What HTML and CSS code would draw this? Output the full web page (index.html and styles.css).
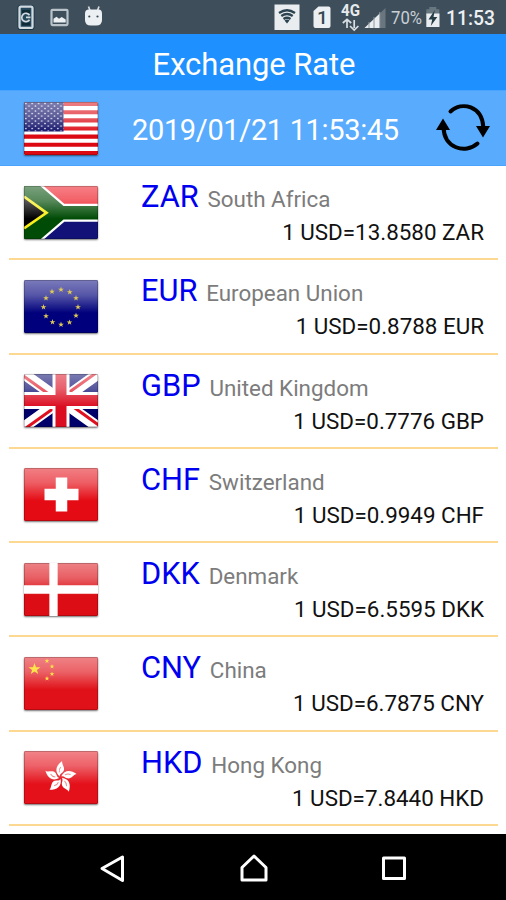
FILE: index.html
```html
<!DOCTYPE html>
<html lang="en">
<head>
<meta charset="utf-8">
<title>Exchange Rate</title>
<link rel="stylesheet" href="styles.css">
</head>
<body>
<svg class="defs" aria-hidden="true">
  <defs>
    <linearGradient id="shine" x1="0" y1="0" x2="0" y2="1">
      <stop offset="0" stop-color="#fff" stop-opacity=".48"/>
      <stop offset=".28" stop-color="#fff" stop-opacity=".34"/>
      <stop offset=".62" stop-color="#fff" stop-opacity="0"/>
    </linearGradient>
    <pattern id="stars" width="6.4" height="5" patternUnits="userSpaceOnUse">
      <circle cx="1.8" cy="1.5" r=".85" fill="#d8d8ee"/>
      <circle cx="5" cy="4" r=".85" fill="#d8d8ee"/>
    </pattern>
    <g id="gloss">
      <rect width="74" height="53" fill="url(#shine)"/>
      <rect x=".5" y=".5" width="73" height="52" fill="none" stroke="#000" stroke-opacity=".2"/>
    </g>
    <path id="star" d="M0-6 1.5-1.8 6-1.8 2.4.9 3.7 5.1 0 2.5-3.7 5.1-2.4.9-6-1.8-1.5-1.8z"/>
    <g id="petal">
      <path d="M-1-1C-7-6-5-12 .5-16.500C0-13.500 4.500-10 2.500-6.500C1.500-4.500-1-4-1-1z" fill="#fff"/>
      <path d="M-1.500-5Q-2.500-8-.5-10.500" fill="none" stroke="#e88" stroke-width="1"/>
    </g>
  </defs>
</svg>
<div class="screen">
  <header class="status">
    <svg class="status-left" viewBox="0 0 110 34">
      <rect x="17.500" y="5" width="17" height="25" rx="3" fill="#17384a"/>
      <rect x="19.500" y="6.700" width="13" height="21.200" rx="1.500" fill="#24475a" stroke="#d2d9df" stroke-width="2.300"/>
      <path d="M22 11.500h8M22 24h8" stroke="#102b38" stroke-width="3"/>
      <path d="M29.500 15.200a4.200 4.200 0 1 0 0 4.500M26 17.300h4.500" fill="none" stroke="#d2d9df" stroke-width="1.700"/>
      <rect x="51.500" y="9.800" width="16" height="15.300" rx="1" fill="#3e4e5b" stroke="#bac3ca" stroke-width="2.200"/>
      <path d="M53.500 22.500v-3.800l3-2 2.500 2 2.700-1.800 4 2.500v3.100z" fill="#edf0f2"/>
      <path d="M88.500 6.500l1.500 4M99 6.500l-1.500 4" stroke="#d7dce0" stroke-width="1.700"/>
      <path d="M85 13.500Q85 9.500 89 9.500h9.500Q102 9.500 102 13.500V20Q102 25.500 96 25.500h-5Q85 25.500 85 20z" fill="#edf0f2"/>
      <circle cx="89.300" cy="16.500" r="1.100" fill="#344854"/><circle cx="97.500" cy="16.500" r="1.100" fill="#344854"/>
    </svg>
    <svg class="status-right" viewBox="270 0 236 34">
      <rect x="274.500" y="4.500" width="25" height="25.500" fill="#e9edef"/>
      <g fill="none" stroke="#2c4351" stroke-width="2.300"><path d="M279 13Q287 7.500 295 13"/><path d="M281.300 16Q287 12 292.700 16"/><path d="M283.500 19Q287 16.500 290.500 19"/></g>
      <path d="M284.500 20.500Q287 18.700 289.500 20.500L287 23.500z" fill="#2c4351"/>
      <path d="M318.500 6.500h10a2 2 0 0 1 2 2V26a2 2 0 0 1-2 2h-13a2 2 0 0 1-2-2V11z" fill="#edf0f2"/>
      <text x="317" y="24.300" class="sim">1</text>
      <text x="341" y="15.500" class="network" textLength="19" lengthAdjust="spacingAndGlyphs">4G</text>
      <path d="M347 28v-7.500M342.800 23l4.200-3.700 4.200 3.700M354.200 20v8M350 26l4.200 4 4.200-4" fill="none" stroke="#d9dfe3" stroke-width="1.700"/>
      <path d="M385.500 8v20h-21z" fill="#697680"/>
      <path d="M380 13.300V28h-15.500z" fill="#e9edef"/>
      <path d="M369 22v6M374 17v11M379.800 12v16" stroke="#8a98a1" stroke-width="1"/>
      <text x="391" y="24.300" class="percent" textLength="31" lengthAdjust="spacingAndGlyphs">70%</text>
      <path d="M429.300 7h7v2.300h3v6h-13v-6h3z" fill="#68777f"/>
      <path d="M426.300 13.500h13.200V27h-13.200z" fill="#e9edef"/>
      <path d="M434.800 10l-6.300 9.500h3.700l-1.400 6.500 6.500-9h-3.800z" fill="#263c47"/>
      <text x="446" y="25" class="clock" textLength="49" lengthAdjust="spacingAndGlyphs">11:53</text>
    </svg>
  </header>
  <h1 class="title"><span>Exchange Rate</span></h1>
  <section class="base">
    <svg class="flag" viewBox="0 0 74 53">
      <rect width="74" height="53" fill="#fff"/>
      <path d="M0 2.050h74M0 10.200h74M0 18.350h74M0 26.500h74M0 34.650h74M0 42.800h74M0 50.950h74" stroke="#dc0812" stroke-width="4.080"/>
      <rect width="39.500" height="29.500" fill="#080864"/><rect width="39.500" height="29.500" fill="url(#stars)"/>
      <use href="#gloss"/>
    </svg>
    <time class="date">2019/01/21 11:53:45</time>
    <svg class="refresh" viewBox="0 0 56 52">
      <path d="M15.500 9.500C27-1 47 4 48.300 25M8.500 25C9 46 30 52.500 42.500 41.500" fill="none" stroke="#000" stroke-width="4" stroke-linecap="round"/>
      <path d="M41 24h14l-7 11.500zM1 28h14L8 16.500z"/>
    </svg>
  </section>
  <main class="rates">
    <article class="row">
      <svg class="flag" viewBox="0 0 74 53">
        <rect width="74" height="27" fill="#ed0d18"/><rect y="27" width="74" height="26" fill="#111178"/>
        <path d="M0-5 37 26.800 0 58.500M34 26.800h41" fill="none" stroke="#fff" stroke-width="18"/>
        <path d="M0-5v63l37-31.500z" fill="#004b05"/>
        <path d="M0-5 37 26.800 0 58.500M34 26.800h41" fill="none" stroke="#004b05" stroke-width="13.500"/>
        <path d="M0 9 23.500 26.800 0 44z" fill="#000"/><path d="M0 10.500 22.500 26.800 0 42.500" fill="none" stroke="#f8ee18" stroke-width="2.700"/>
        <use href="#gloss"/>
      </svg>
      <div class="info"><div class="currency"><span class="code">ZAR</span> <span class="country">South Africa</span></div><div class="rate">1 USD=13.8580 ZAR</div></div>
    </article>
    <article class="row">
      <svg class="flag" viewBox="0 0 74 53">
        <rect width="74" height="53" fill="#00007c"/>
        <use href="#gloss"/>
        <g fill="#dfca55"><use href="#star" transform="translate(37 9.500) scale(.48)"/><use href="#star" transform="translate(45.800 12) scale(.48)"/><use href="#star" transform="translate(52 18) scale(.48)"/><use href="#star" transform="translate(54 27) scale(.48)"/><use href="#star" transform="translate(52 35.500) scale(.48)"/><use href="#star" transform="translate(45.500 42.300) scale(.48)"/><use href="#star" transform="translate(37 44.500) scale(.48)"/><use href="#star" transform="translate(28.500 42) scale(.48)"/><use href="#star" transform="translate(22 36) scale(.48)"/><use href="#star" transform="translate(19.500 27) scale(.48)"/><use href="#star" transform="translate(22 18) scale(.48)"/><use href="#star" transform="translate(28 11.500) scale(.48)"/></g>
      </svg>
      <div class="info"><div class="currency"><span class="code">EUR</span> <span class="country">European Union</span></div><div class="rate">1 USD=0.8788 EUR</div></div>
    </article>
    <article class="row">
      <svg class="flag" viewBox="0 0 74 53">
        <rect width="74" height="53" fill="#00006b"/>
        <path d="M0 0 74 53M74 0 0 53" stroke="#fff" stroke-width="11"/>
        <path d="M-2 1 35 27.500M76 52 39 25.500M72-1 37 24M2 54 37 29" stroke="#df1020" stroke-width="3"/>
        <path d="M37 0v53M0 26.500h74" stroke="#fff" stroke-width="17"/>
        <path d="M37 0v53M0 26.500h74" stroke="#db0d20" stroke-width="11"/>
        <use href="#gloss"/>
      </svg>
      <div class="info"><div class="currency"><span class="code">GBP</span> <span class="country">United Kingdom</span></div><div class="rate">1 USD=0.7776 GBP</div></div>
    </article>
    <article class="row">
      <svg class="flag" viewBox="0 0 74 53">
        <rect width="74" height="53" fill="#e40b14"/><use href="#gloss"/>
        <path d="M37.500 9.500v34M20.500 26.500h34" stroke="#fff" stroke-width="11.500"/>
      </svg>
      <div class="info"><div class="currency"><span class="code">CHF</span> <span class="country">Switzerland</span></div><div class="rate">1 USD=0.9949 CHF</div></div>
    </article>
    <article class="row">
      <svg class="flag" viewBox="0 0 74 53">
        <rect width="74" height="53" fill="#dc0d14"/><use href="#gloss"/>
        <path d="M29.500 0v53M0 26.500h74" stroke="#fff" stroke-width="8.300"/>
      </svg>
      <div class="info"><div class="currency"><span class="code">DKK</span> <span class="country">Denmark</span></div><div class="rate">1 USD=6.5595 DKK</div></div>
    </article>
    <article class="row">
      <svg class="flag" viewBox="0 0 74 53">
        <rect width="74" height="53" fill="#e01118"/><use href="#gloss"/>
        <g fill="#ffe34a"><use href="#star" transform="translate(10.500 12)"/><use href="#star" transform="translate(23 4) scale(.4)"/><use href="#star" transform="translate(28 9.500) scale(.4)"/><use href="#star" transform="translate(28 17) scale(.4)"/><use href="#star" transform="translate(23 21.500) scale(.4)"/></g>
      </svg>
      <div class="info"><div class="currency"><span class="code">CNY</span> <span class="country">China</span></div><div class="rate">1 USD=6.7875 CNY</div></div>
    </article>
    <article class="row">
      <svg class="flag" viewBox="0 0 74 53">
        <rect width="74" height="53" fill="#e4111b"/><use href="#gloss"/>
        <g transform="translate(36.500 26.500) rotate(4)"><use href="#petal"/><use href="#petal" transform="rotate(72)"/><use href="#petal" transform="rotate(144)"/><use href="#petal" transform="rotate(216)"/><use href="#petal" transform="rotate(288)"/></g>
      </svg>
      <div class="info"><div class="currency"><span class="code">HKD</span> <span class="country">Hong Kong</span></div><div class="rate">1 USD=7.8440 HKD</div></div>
    </article>
  </main>
  <nav class="navigation">
    <svg viewBox="0 0 28 30"><path d="M3 14.500 23.500 3v23.500z"/></svg>
    <svg viewBox="0 0 28 30"><path d="M2 13.500 14 2l12 11.500v12.500h-24z"/></svg>
    <svg viewBox="0 0 28 30"><rect x="3.500" y="4" width="21" height="20.500"/></svg>
  </nav>
</div>
</body>
</html>
```
FILE: styles.css
```css
* { box-sizing: border-box; }
body { margin: 0; background: #fff; font-family: Roboto, "Liberation Sans", sans-serif; }
.defs { position: absolute; width: 0; height: 0; }
.screen { display: flex; flex-direction: column; width: 506px; height: 900px; overflow: hidden; }
.status { display: flex; justify-content: space-between; flex: 0 0 34px; background: #3e4e5b; }
.status-left { width: 110px; height: 34px; }
.status-right { width: 236px; height: 34px; }
.sim { font-size: 19px; font-weight: 500; fill: #344854; }
.network { font-size: 16px; font-weight: 700; fill: #e6eaed; }
.percent { font-size: 18.500px; fill: #c9d0d5; }
.clock { font-size: 20.500px; font-weight: 500; fill: #edf0f2; }
.title { display: flex; align-items: center; justify-content: center; flex: 0 0 56px; margin: 0; padding: 6px 0 0 2px; background: #1e90ff; color: #fff; font-size: 31px; font-weight: 400; line-height: 36px; letter-spacing: -.1px; }
.base { display: flex; align-items: center; flex: 0 0 76px; padding: 0 15px 0 24px; background: #58abfd; border-top: 1px solid #4aa3fc; border-bottom: 1px solid #4aa3fc; }
.flag { display: block; flex: none; width: 74px; height: 53px; border-radius: 1.500px; box-shadow: 0 1px 2px rgba(0, 0, 0, .55); }
.date { margin-left: 34px; color: #fff; font-size: 29px; line-height: 34px; letter-spacing: -.35px; white-space: nowrap; padding-top: 4px; }
.refresh { width: 56px; height: 52px; margin-left: auto; }
.rates { display: flex; flex-direction: column; flex: 0 0 668px; padding: 0 8px 0 9px; overflow: hidden; }
.row { display: flex; align-items: center; flex: 0 0 94.250px; padding: 0 14px 0 15px; border-bottom: 2px solid #fcd891; }
.info { flex: 1; margin-left: 43px; padding-top: 3px; white-space: nowrap; }
.currency { height: 35px; line-height: 34.500px; }
.code { margin-right: 4.800px; color: #0000f0; font-size: 30.800px; }
.country { color: #7c7c7c; font-size: 22.400px; }
.rate { height: 32px; color: #111; font-size: 22.400px; line-height: 34px; text-align: right; }
.navigation { display: flex; align-items: center; justify-content: space-between; flex: 1; padding: 4px 98px 0 99px; background: #000; }
.navigation svg { width: 28px; height: 30px; fill: none; stroke: #fff; stroke-width: 3; stroke-linejoin: round; }
```
